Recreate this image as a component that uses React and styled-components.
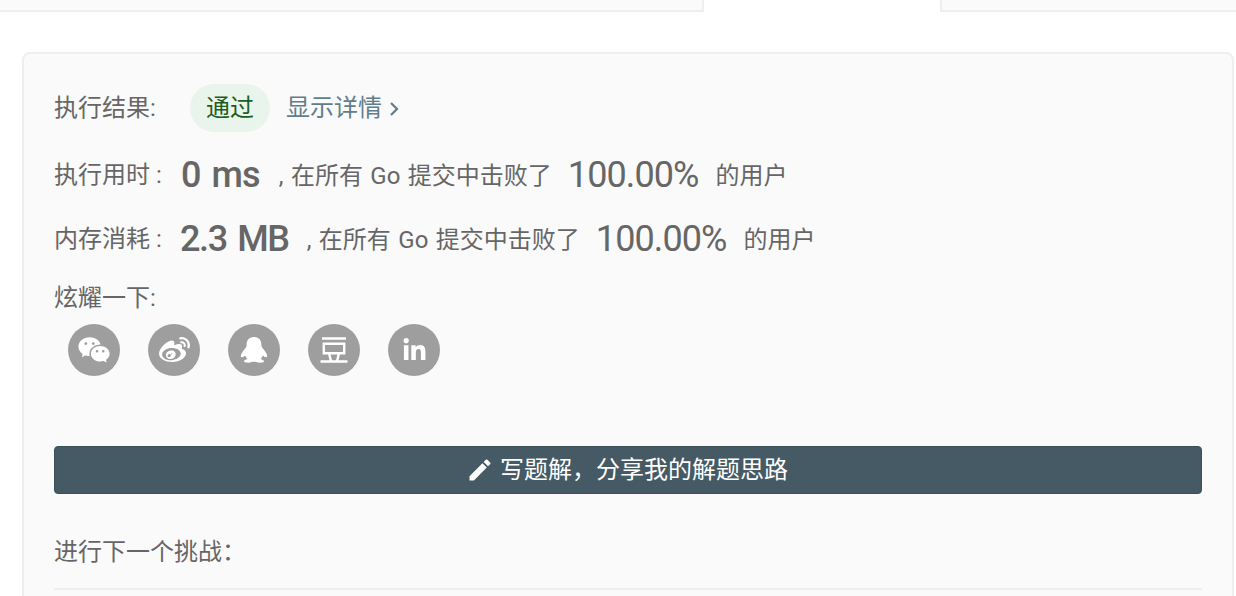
import React from "react";
import styled, { createGlobalStyle } from "styled-components";
import { MdEdit } from "react-icons/md";
import { FaWeibo, FaLinkedinIn } from "react-icons/fa";
import { RiWechatFill } from "react-icons/ri";

const Global = createGlobalStyle`
  html, body { margin: 0; padding: 0; background: #fff; }
  body { font-family: Roboto, "Noto Sans CJK SC", sans-serif; color: #666; overflow: hidden; }
`;

const Page = styled.div`
  width: 1236px;
  height: 596px;
  overflow: hidden;
`;
const Tabs = styled.div`
  display: grid;
  grid-template-columns: 704px 236px 1fr;
  height: 12px;
`;
const Tab = styled.div`
  background: ${(p) => (p.$active ? "#fff" : "#fafafa")};
  border-bottom: ${(p) => (p.$active ? "none" : "2px solid #eee")};
  border-right: ${(p) => (p.$side === "left" ? "2px solid #eee" : "none")};
  border-left: ${(p) => (p.$side === "right" ? "2px solid #eee" : "none")};
  box-sizing: border-box;
`;
const Card = styled.section`
  box-sizing: border-box;
  margin: 40px 2px 0 22px;
  height: 700px;
  padding: 30px 30px;
  background: #fafafa;
  border: 2px solid #eee;
  border-radius: 8px;
`;
const Row = styled.div`
  display: flex;
  align-items: center;
  height: 48px;
  margin-top: ${(p) => p.$top || 0}px;
  font-size: 24px;
  line-height: 48px;
  white-space: nowrap;
`;
const Label = styled.span`
  width: ${(p) => p.$w};
  flex: none;
`;
const Pill = styled.span`
  display: inline-flex;
  align-items: center;
  justify-content: center;
  width: 80px;
  height: 48px;
  border-radius: 24px;
  background: #e9f5ec;
  color: #1b5e20;
`;
const DetailLink = styled.a`
  display: inline-flex;
  align-items: center;
  margin-left: 16px;
  color: #607d8b;
`;
const Chevron = styled.svg`
  width: 10px;
  height: 16px;
  margin-left: 7px;
  margin-top: 1px;
`;
const Big = styled.span`
  font-size: 36px;
  font-weight: ${(p) => p.$weight || 500};
  margin: 0 ${(p) => p.$right}px 0 ${(p) => p.$left || 0}px;
  letter-spacing: ${(p) => p.$spacing};
  word-spacing: ${(p) => p.$gap || 0}px;
  color: #666;
`;
const Stat = styled.span`
  margin-top: 1px;
  word-spacing: 1.5px;
`;
const ShareTitle = styled.div`
  font-size: 24px;
  line-height: 34px;
  margin-top: 18px;
`;
const Icons = styled.div`
  display: flex;
  gap: 28px;
  margin: 9px 0 0 14px;
`;
const IconDisc = styled.a`
  display: flex;
  align-items: center;
  justify-content: center;
  width: 52px;
  height: 52px;
  border-radius: 50%;
  background: #9e9e9e;
  color: #fff;
`;
const WriteButton = styled.button`
  display: flex;
  align-items: center;
  justify-content: center;
  gap: 6px;
  width: 100%;
  height: 48px;
  margin-top: 70px;
  padding: 0 2px 0 0;
  background: #455a64;
  color: #fff;
  border: 1px solid #3d5059;
  border-radius: 4px;
  font: inherit;
  font-size: 24px;
  line-height: 46px;
`;
const NextTitle = styled.div`
  font-size: 24px;
  line-height: 34px;
  margin-top: 41px;
`;
const Divider = styled.hr`
  border: 0;
  height: 2px;
  background: #eee;
  margin: 19px 0 0;
`;

const Douban = () => (
  <svg width="28" height="28" viewBox="0 0 28 28" fill="none" stroke="#fff" strokeWidth="2.4">
    <path d="M2 2.5h24M3.8 7.8h20.4v9.4H3.8zM9 17.2l2 8M19 17.2l-2 8M.5 25.5h27" />
  </svg>
);

const Penguin = () => (
  <svg width="32" height="28" viewBox="0 0 28 28" preserveAspectRatio="none" fill="#fff">
    <path d="M14 1C9 1 7.5 5 7.5 9.5C7.5 11 6.5 12 5.5 13.5C3.5 16.5 1.8 19.5 2.8 21C3.6 21.8 5.5 20.5 6.3 19.5C6.8 21 7.3 22 8.3 23C6.5 23.6 5 24.3 5.3 25.5C5.8 27 10 27 12 26C13 25.6 15 25.6 16 26C18 27 22.2 27 22.7 25.5C23 24.3 21.5 23.6 19.7 23C20.7 22 21.2 21 21.7 19.5C22.5 20.5 24.4 21.8 25.2 21C26.2 19.5 24.5 16.5 22.5 13.5C21.5 12 20.5 11 20.5 9.5C20.5 5 19 1 14 1Z" />
  </svg>
);

export default function App() {
  return (
    <Page>
      <Global />
      <Tabs>
        <Tab $side="left" />
        <Tab $active />
        <Tab $side="right" />
      </Tabs>
      <Card>
        <Row>
          <Label $w="136px">执行结果:</Label>
          <Pill>通过</Pill>
          <DetailLink>
            显示详情
            <Chevron viewBox="0 0 10 16" fill="none" stroke="#607d8b" strokeWidth="2.2">
              <path d="M2 2l6 6-6 6" />
            </Chevron>
          </DetailLink>
        </Row>
        <Row $top={19}>
          <Label $w="127px">执行用时 :</Label>
          <Big $right={19} $spacing="-0.9px" $gap={3}>0 ms</Big>
          <Stat>, 在所有 Go 提交中击败了</Stat>
          <Big $left={16} $right={17} $weight={400} $spacing="-0.9px">100.00%</Big>
          <Stat>的用户</Stat>
        </Row>
        <Row $top={16}>
          <Label $w="126px">内存消耗 :</Label>
          <Big $right={18} $spacing="-1.4px" $gap={3}>2.3 MB</Big>
          <Stat>, 在所有 Go 提交中击败了</Stat>
          <Big $left={16} $right={17} $weight={400} $spacing="-0.9px">100.00%</Big>
          <Stat>的用户</Stat>
        </Row>
        <ShareTitle>炫耀一下:</ShareTitle>
        <Icons>
          <IconDisc><RiWechatFill size={34} /></IconDisc>
          <IconDisc><FaWeibo size={31} /></IconDisc>
          <IconDisc><Penguin /></IconDisc>
          <IconDisc><Douban /></IconDisc>
          <IconDisc><FaLinkedinIn size={25} /></IconDisc>
        </Icons>
        <WriteButton>
          <MdEdit size={28} />
          写题解，分享我的解题思路
        </WriteButton>
        <NextTitle>进行下一个挑战：</NextTitle>
        <Divider />
      </Card>
    </Page>
  );
}
